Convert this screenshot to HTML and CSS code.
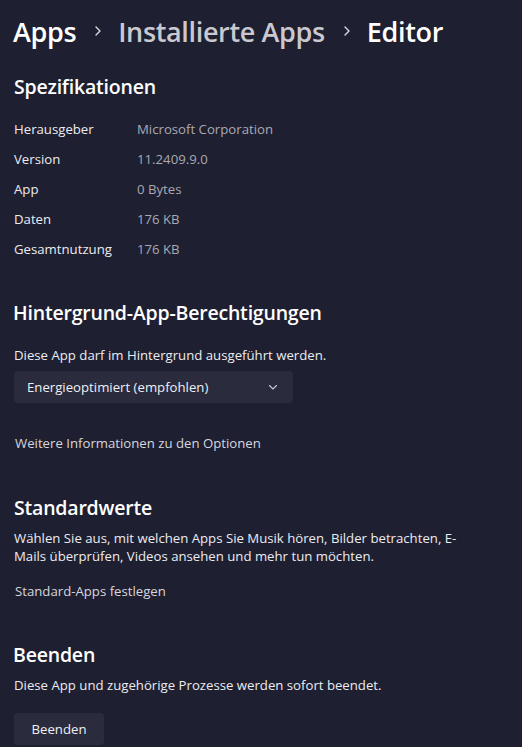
FILE: index.html
```html
<!DOCTYPE html>
<html lang="de">
<head>
<meta charset="utf-8">
<link rel="stylesheet" href="styles.css">
</head>
<body>
<div class="page">
  <nav class="crumbs">
    <span class="crumb">Apps</span>
    <svg class="chev" width="12" height="14" viewBox="0 0 12 14"><path d="M4 3 L8 7 L4 11" fill="none" stroke="#d8d8de" stroke-width="1.4" stroke-linecap="round" stroke-linejoin="round"/></svg>
    <span class="crumb dim">Installierte Apps</span>
    <svg class="chev" width="12" height="14" viewBox="0 0 12 14"><path d="M4 3 L8 7 L4 11" fill="none" stroke="#d8d8de" stroke-width="1.4" stroke-linecap="round" stroke-linejoin="round"/></svg>
    <span class="crumb">Editor</span>
  </nav>

  <section class="sec spec">
    <h2>Spezifikationen</h2>
    <dl class="specs">
      <div class="row"><dt>Herausgeber</dt><dd>Microsoft Corporation</dd></div>
      <div class="row"><dt>Version</dt><dd>11.2409.9.0</dd></div>
      <div class="row"><dt>App</dt><dd>0 Bytes</dd></div>
      <div class="row"><dt>Daten</dt><dd>176 KB</dd></div>
      <div class="row"><dt>Gesamtnutzung</dt><dd>176 KB</dd></div>
    </dl>
  </section>

  <section class="sec bg">
    <h2 class="h-tight">Hintergrund-App-Berechtigungen</h2>
    <p class="txt">Diese App darf im Hintergrund ausgeführt werden.</p>
    <div class="select">
      <span>Energieoptimiert (empfohlen)</span>
      <svg width="12" height="12" viewBox="0 0 12 12"><path d="M2.5 4.5 L6 8 L9.5 4.5" fill="none" stroke="#c8c8d0" stroke-width="1.1" stroke-linecap="round" stroke-linejoin="round"/></svg>
    </div>
    <a class="link">Weitere Informationen zu den Optionen</a>
  </section>

  <section class="sec defaults">
    <h2>Standardwerte</h2>
    <p class="txt para">Wählen Sie aus, mit welchen Apps Sie Musik hören, Bilder betrachten, E-Mails überprüfen, Videos ansehen und mehr tun möchten.</p>
    <a class="link">Standard-Apps festlegen</a>
  </section>

  <section class="sec end">
    <h2 class="h-tight">Beenden</h2>
    <p class="txt">Diese App und zugehörige Prozesse werden sofort beendet.</p>
    <button class="btn">Beenden</button>
  </section>
</div>
</body>
</html>
```
FILE: styles.css
```css
html, body {
  margin: 0;
  padding: 0;
  background: #1e1f31;
  height: 100%;
  overflow: hidden;
}
body {
  font-family: "Open Sans", "Noto Sans", sans-serif;
  color: #ffffff;
}
.page {
  padding: 0 0 0 14px;
}
.crumbs {
  display: flex;
  align-items: center;
  height: 62px;
  margin-left: -1px;
  padding-bottom: 2px;
}
.crumb {
  font-size: 27px;
  font-weight: 600;
  letter-spacing: -0.35px;
  color: #ffffff;
}
.crumb.dim {
  color: #c9c9cf;
}
.chev {
  margin: 0 14px 0 16px;
}
h2 {
  margin: 0;
  font-size: 19.5px;
  font-weight: 600;
  line-height: 26px;
  letter-spacing: -0.2px;
}
.spec h2 {
  margin-top: 10px;
}
.specs {
  margin: 14px 0 0;
}
.row {
  display: flex;
  height: 30px;
  align-items: center;
  font-size: 13.2px;
}
dt {
  width: 123px;
  color: #ececf0;
}
dd {
  margin: 0;
  color: #a9a9b3;
}
.bg {
  margin-top: 36px;
}
.h-tight {
  margin-left: -1px;
}
.txt {
  margin: 0;
  font-size: 13.2px;
  line-height: 18px;
  color: #ececf0;
}
.bg .txt {
  margin-top: 20px;
}
.select {
  margin-top: 7px;
  width: 279px;
  height: 32px;
  box-sizing: border-box;
  background: #2a2b3d;
  border-radius: 4px;
  display: flex;
  align-items: center;
  justify-content: space-between;
  padding: 0 14px 0 13px;
  font-size: 13.2px;
  color: #f0f0f4;
}
.link {
  display: block;
  font-size: 13.2px;
  color: #d6d6de;
  margin-left: 1px;
}
.bg .link {
  margin-top: 31px;
}
.defaults {
  margin-top: 43px;
}
.para {
  margin-top: 8px;
  width: 460px;
}
.defaults .link {
  margin-top: 17px;
}
.end {
  margin-top: 42px;
}
.end .txt {
  margin-top: 8px;
}
.btn {
  margin-top: 19px;
  width: 90px;
  height: 32px;
  background: #2a2b3d;
  border: none;
  border-radius: 4px;
  color: #f0f0f4;
  font-family: inherit;
  font-size: 13.2px;
  padding: 0;
}
```
